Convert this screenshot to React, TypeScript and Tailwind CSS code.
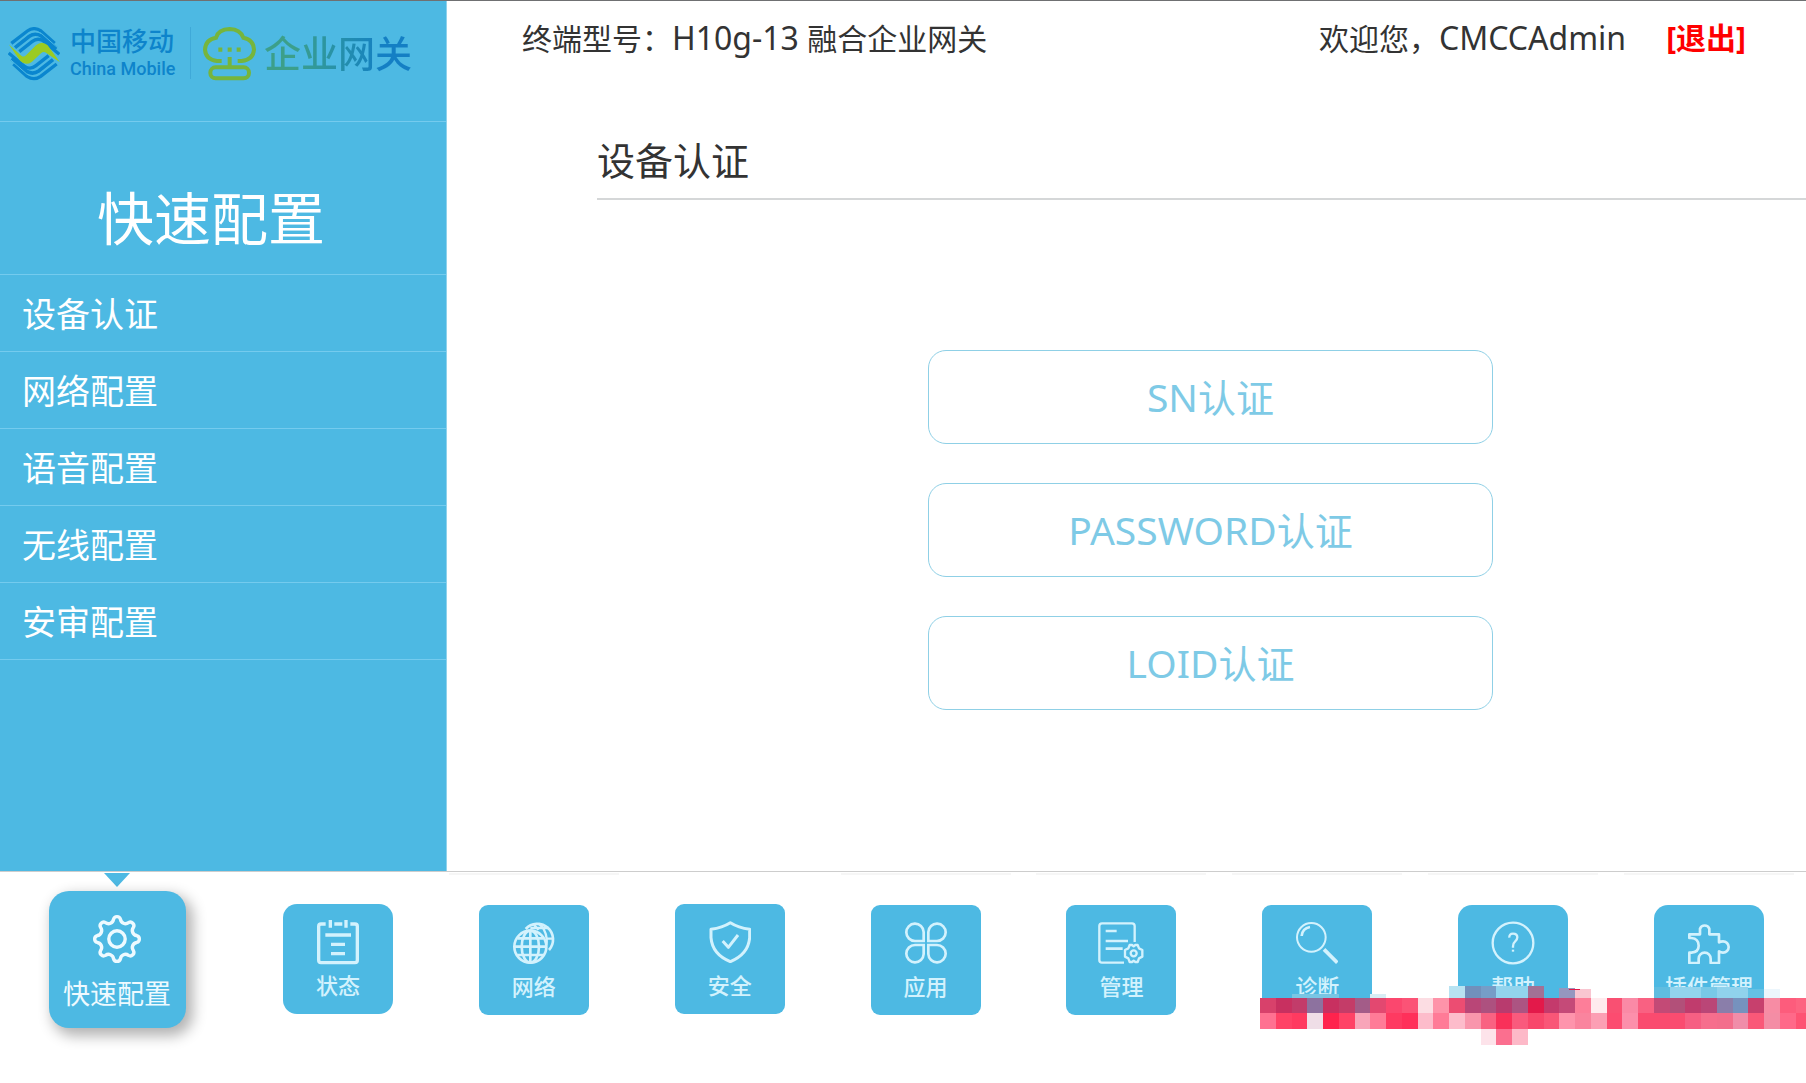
import React from 'react';
import clsx from 'clsx';

interface NavItem {
  label: string;
  icon: React.FC;
  framed: boolean;
  rounded: string;
}

const menuItems = ['设备认证', '网络配置', '语音配置', '无线配置', '安审配置'];

const authMethods = ['SN', 'PASSWORD', 'LOID'];

const gearPath = () => {
  const point = (deg: number) => {
    const rad = (deg * Math.PI) / 180;
    return `${(25 + 20 * Math.cos(rad)).toFixed(2)} ${(25 + 20 * Math.sin(rad)).toFixed(2)}`;
  };
  let d = `M${point(-10)}`;
  for (let k = 0; k < 8; k++) {
    d += `A3.6 3.6 0 0 1 ${point(k * 45 + 10)}`;
    d += `A5 5 0 0 0 ${point(k * 45 + 35)}`;
  }
  return d + 'Z';
};

const GearIcon = () => (
  <svg className="size-[50px]" viewBox="0 0 50 50" fill="none" stroke="currentColor" strokeWidth="3.4">
    <path d={gearPath()} strokeLinejoin="round" />
    <circle cx="25" cy="25" r="8.2" />
  </svg>
);

const StatusIcon = () => (
  <svg className="h-[46px] w-[42px]" viewBox="0 0 126 138" fill="none" stroke="currentColor" strokeWidth="10">
    <path d="M26 15H12Q5 15 5 22V124Q5 131 12 131H114Q121 131 121 124V22Q121 15 114 15H100" />
    <path d="M40 3V26M87 3V26M52 15H76" />
    <path d="M25 48H102M42 76H84M42 104H84" />
  </svg>
);

const NetworkIcon = () => (
  <svg className="size-[42px]" viewBox="0 0 126 126" fill="none" stroke="currentColor" strokeWidth="8">
    <circle cx="52" cy="74" r="48" />
    <ellipse cx="52" cy="74" rx="26" ry="48" />
    <path d="M52 26V122M4 74H100M13 49H91M13 99H91" />
    <path d="M38 21A47 47 0 1 1 108 84" />
    <path d="M62 8Q70 14 76 24M76 4Q98 20 101 50Q102 62 100 70M52 18H107M99 50H122" strokeWidth="7" />
  </svg>
);

const ShieldIcon = () => (
  <svg className="size-[42px]" viewBox="0 0 126 126" fill="none" stroke="currentColor" strokeWidth="9" strokeLinejoin="round">
    <path d="M64 5Q40 20 6 25V50Q10 100 64 122Q118 100 122 50V25Q88 20 64 5Z" />
    <path d="M41 60L58 79L87 42" />
  </svg>
);

const AppsIcon = () => (
  <svg className="size-[42px]" viewBox="0 0 126 126" fill="none" stroke="currentColor" strokeWidth="8">
    <path d="M56 57H30A26 26 0 1 1 56 30Z" />
    <path d="M70 57H96A26 26 0 1 0 70 30Z" />
    <path d="M56 69H30A26 26 0 1 0 56 96Z" />
    <path d="M70 69H96A26 26 0 1 1 70 96Z" />
  </svg>
);

const ManageIcon = () => (
  <svg className="h-[42px] w-[46px]" viewBox="0 0 138 126" fill="none" stroke="currentColor" strokeWidth="7" strokeLinejoin="round">
    <path d="M110 60V12Q110 4 102 4H12Q4 4 4 12V114Q4 122 12 122H78" />
    <path d="M23 27H56M23 57H90M23 80H74" strokeWidth="8" />
    <path d="M95 69H102L107 73L112 69H119L123 79L133 84V104L123 109L119 120H112L107 116L102 120H95L91 109L81 104V84L91 79Z" />
    <circle cx="107" cy="94" r="9" />
  </svg>
);

const DiagnoseIcon = () => (
  <svg className="size-[42px]" viewBox="0 0 126 126" fill="none" stroke="currentColor" strokeWidth="6">
    <circle cx="46" cy="46" r="43" />
    <path d="M17 42Q19 19 42 15" strokeWidth="8" />
    <path d="M84 82L124 122" strokeWidth="11" />
  </svg>
);

const HelpIcon = () => (
  <svg className="size-[44px]" viewBox="0 0 132 132" fill="none" stroke="currentColor" strokeWidth="7">
    <circle cx="66" cy="66" r="61" />
    <path d="M55 50Q54 38 66 38Q79 38 79 49Q79 56 72 62Q66 67 66 76V80" />
    <path d="M66 86V92" />
  </svg>
);

const PluginIcon = () => (
  <svg className="size-[42px]" viewBox="0 0 126 126" fill="none" stroke="currentColor" strokeWidth="8" strokeLinejoin="round">
    <path d="M4 37H36V20A15 15 0 0 1 64 20V37H93V61Q98 58 105 58A16 16 0 0 1 105 92Q98 92 93 88V123H68V110A18 18 0 0 0 32 110V123H4V92H10Q32 90 32 71Q32 50 10 48H4Z" />
  </svg>
);

const navItems: NavItem[] = [
  { label: '状态', icon: StatusIcon, framed: false, rounded: 'rounded-[14px]' },
  { label: '网络', icon: NetworkIcon, framed: true, rounded: 'rounded-[9px]' },
  { label: '安全', icon: ShieldIcon, framed: false, rounded: 'rounded-[9px]' },
  { label: '应用', icon: AppsIcon, framed: true, rounded: 'rounded-[9px]' },
  { label: '管理', icon: ManageIcon, framed: true, rounded: 'rounded-[9px]' },
  { label: '诊断', icon: DiagnoseIcon, framed: true, rounded: 'rounded-[9px]' },
  { label: '帮助', icon: HelpIcon, framed: true, rounded: 'rounded-[14px]' },
  { label: '插件管理', icon: PluginIcon, framed: true, rounded: 'rounded-[14px]' },
];

// Rows of the mosaic strip, one colour per cell
const mosaicUpper = [
  '#d8416b', '#c83060', '#c23c6a', '#8d729f', '#c83060', '#c43c68', '#a35c88', '#e34870', '#fb476e',
  '#fb5376', '#fcdde3', '#fe93a9', '#ec4d72', '#b94677', '#ad517f', '#b83b6e', '#ac5482', '#e3194a',
  '#c43a6c', '#c54a78', '#fd7e99', '#ffebee', '#f95072', '#fa8aa6', '#f96182', '#c34a76', '#b25079',
  '#c03c6d', '#ba4677', '#8a7eaa', '#7692be', '#c7406d', '#f78ca4', '#fd5c7c', '#fd6481',
];
const mosaicLower = [
  '#ff7191', '#ff4266', '#ff3a60', '#efdee7', '#ff234d', '#ff4266', '#f8a5b9', '#ff7b97', '#fe3a61',
  '#ff305a', '#fdbccb', '#ff7b97', '#fdbccb', '#f996ac', '#f96282', '#f93059', '#f95a7d', '#f8476b',
  '#f95677', '#fe94ac', '#fa849e', '#fc9fb4', '#fc4c70', '#fc8fab', '#fa4b6f', '#fa4b6f', '#fa4c70',
  '#f65f83', '#f66e8d', '#f36e8c', '#f08da9', '#fa5878', '#f48da5', '#ff6989', '#fe5373',
];
// [column, top, height, colour]
const mosaicExtra: [number, number, number, string][] = [
  [2, 8, 4, '#79c6e4'], [3, 8, 4, '#79c6e4'], [4, 8, 4, '#79c6e4'], [7, 8, 4, '#d7eef5'],
  [12, 0, 12, '#b8e3f2'], [13, 0, 12, '#7190bb'], [14, 0, 12, '#769dc7'], [15, 0, 12, '#92d4ed'],
  [16, 0, 12, '#92d4ed'], [17, 0, 12, '#a27195'], [19, 2, 10, '#9597bf'], [20, 3, 9, '#f9c6d1'],
  [25, 1, 11, '#5fbde0'], [26, 1, 11, '#92d4ed'], [27, 1, 11, '#92d4ed'], [28, 1, 11, '#78c9e7'],
  [29, 1, 11, '#90d2ec'], [30, 1, 11, '#90d2ec'], [31, 3, 9, '#64c1e4'], [32, 3, 9, '#ecf6fc'],
  [14, 43, 16, '#fde3ea'], [15, 43, 16, '#fb6f8f'], [16, 43, 16, '#fdb9c8'],
];

const Mosaic = () => {
  const cell = 15.75;
  return (
    <svg
      className="pointer-events-none absolute right-px bottom-[38px] h-[59px] w-[546px]"
      viewBox="0 0 546 59"
      shapeRendering="crispEdges"
      aria-hidden="true"
    >
      {mosaicUpper.map((color, i) => (
        <rect key={i} x={i * cell} y="12" width={cell} height="15" fill={color} />
      ))}
      {mosaicLower.map((color, i) => (
        <rect key={i} x={i * cell} y="27" width={cell} height="16" fill={color} />
      ))}
      {mosaicExtra.map(([col, y, height, color]) => (
        <rect key={`${col}-${y}`} x={col * cell} y={y} width={cell} height={height} fill={color} />
      ))}
      <rect x="309" y="3" width="11" height="1" fill="#e3194a" />
    </svg>
  );
};

const MobileMark = () => (
  <svg className="h-[54px] w-[52px] shrink-0" viewBox="24 82 156 162" fill="none" aria-hidden="true">
    <g stroke="#0a86cf">
      <path d="M34 131L82 94Q102 80 123 94L164 131" strokeWidth="10" />
      <path d="M45 144L88 110Q105 98 124 109L170 147" strokeWidth="11" />
      <path d="M58 156L96 126Q112 113 129 123L178 164" strokeWidth="10" />
      <path d="M170 193L122 230Q102 244 81 230L40 193" strokeWidth="10" />
      <path d="M159 180L116 214Q99 226 80 215L34 177" strokeWidth="11" />
      <path d="M146 168L108 198Q92 211 75 201L26 160" strokeWidth="10" />
    </g>
    <g stroke="#4db9e3" strokeWidth="3">
      <path d="M40 138L86 102Q104 89 124 101L176 147" />
      <path d="M164 187L118 222Q100 235 80 223L28 177" />
    </g>
    <path
      d="M26 134L64 168Q71 174 78 167L108 137Q126 122 143 137L180 188L139 160Q131 154 123 161L96 186Q77 200 61 184Z"
      fill="#9bcb22"
    />
  </svg>
);

const CloudMark = () => (
  <svg className="h-[54px] w-[53px] shrink-0" viewBox="606 80 159 162" fill="none" stroke="#76b53c" strokeWidth="12" aria-hidden="true">
    <path d="M662 182H648Q614 178 612 148Q613 118 645 112Q652 87 686 86Q718 87 727 112Q758 118 759 148Q757 178 722 182H710" />
    <path d="M686 170V200" />
    <rect x="628" y="201" width="116" height="33" rx="16" />
    <path d="M652 148H664M680 148H692M707 148H719" strokeWidth="13" />
  </svg>
);

const Brand = () => (
  <div className="flex h-[120px] items-start pt-[26px] pl-2">
    <MobileMark />
    <div className="ml-2.5 flex w-[110px] flex-col font-['Roboto','Noto_Sans_CJK_SC',sans-serif] text-[#0d84cb]">
      <span className="text-[26px] leading-[31px] font-medium">中国移动</span>
      <span className="text-[18px] leading-[21px] font-medium whitespace-nowrap">China Mobile</span>
    </div>
    <div className="ml-2.5 h-[52px] w-px bg-[#3fa9d8]" />
    <div className="ml-3 flex">
      <CloudMark />
    </div>
    <span className="ml-2 bg-linear-to-r from-[#3c9f8a] from-20% to-[#147fc4] to-80% bg-clip-text text-[37px] leading-[54px] font-medium text-transparent">
      企业网关
    </span>
  </div>
);

const Sidebar = () => (
  <aside className="w-[447px] shrink-0 border-r border-[#8fd2ec] bg-[#4db9e3] text-white">
    <Brand />
    <h1 className="flex h-[153px] items-center justify-center border-t border-[#74cbee] pt-10 pr-6 text-[57px] leading-[60px]">
      快速配置
    </h1>
    <nav className="border-t border-[#74cbee]">
      {menuItems.map(item => (
        <a
          key={item}
          href="#"
          className="flex h-[77px] items-center border-b border-[#74cbee] pt-0.5 pl-[22px] text-[34px] leading-[40px]"
        >
          {item}
        </a>
      ))}
    </nav>
  </aside>
);

const TopBar = () => (
  <header className="flex items-center justify-between pt-4 pr-[60px] pl-[75px] text-[30px] leading-[42px]">
    <div>
      终端型号：<span className="text-[32px]">H10g-13 </span>融合企业网关
    </div>
    <div className="flex gap-10">
      <span>
        欢迎您，<span className="text-[32px]">CMCCAdmin</span>
      </span>
      <a href="#" className="font-bold text-[#ff0000]">[退出]</a>
    </div>
  </header>
);

const BottomNav = () => (
  <footer className="relative -mr-px flex h-[212px] border-t border-[#cdcdcd] bg-white pt-px">
    <div className="flex w-[240px] shrink-0 flex-col items-center pr-1.5">
      <svg className="h-[14px] w-[26px] text-[#4db9e3]" viewBox="0 0 26 14" fill="currentColor" aria-hidden="true">
        <path d="M0 0H26L13 14Z" />
      </svg>
      <a
        href="#"
        aria-current="page"
        className="mt-1 flex size-[137px] flex-col items-center rounded-[20px] bg-[#4db9e3] pt-[23px] text-[#eefaff] shadow-[5px_6px_14px_2px_rgba(0,0,0,0.3)]"
      >
        <GearIcon />
        <span className="mt-3 text-[27px] leading-[36px]">快速配置</span>
      </a>
    </div>
    {navItems.map(({ label, icon: Icon, framed, rounded }) => (
      <div key={label} className="flex flex-1 justify-center">
        <div
          className={clsx(
            'flex w-[170px] justify-center',
            framed ? 'border-t-2 border-[#f6f6f6] pt-[30px]' : 'pt-[31px]'
          )}
        >
          <a
            href="#"
            className={clsx('flex size-[110px] flex-col items-center bg-[#4db9e3] pt-[15px] text-[#d3f2fd]', rounded)}
          >
            <span className="flex h-[46px] items-center">
              <Icon />
            </span>
            <span className="mt-1.5 text-[22px] leading-[28px] font-medium whitespace-nowrap">{label}</span>
          </a>
        </div>
      </div>
    ))}
    <Mosaic />
  </footer>
);

const App: React.FC = () => {
  return (
    <div className="flex min-h-screen flex-col overflow-x-hidden border-t border-[#6f7072] bg-white font-['Noto_Sans','Noto_Sans_CJK_SC',sans-serif] text-[#333]">
      <div className="flex flex-1">
        <Sidebar />
        <main className="flex flex-1 flex-col">
          <TopBar />
          <section className="pt-[72px] pl-[150px]">
            <h2 className="border-b-2 border-[#d5d7d8] pb-2.5 text-[38px] leading-[56px]">设备认证</h2>
            <div className="flex flex-col items-center gap-[39px] pt-[150px] pl-[18px]">
              {authMethods.map(method => (
                <button
                  key={method}
                  type="button"
                  className="h-[94px] w-[565px] rounded-[18px] border border-[#8fd0e6] text-[38px] leading-[56px] text-[#7ecae6]"
                >
                  <span className="text-[39px]">{method}</span>认证
                </button>
              ))}
            </div>
          </section>
        </main>
      </div>
      <BottomNav />
    </div>
  );
};

export default App;
